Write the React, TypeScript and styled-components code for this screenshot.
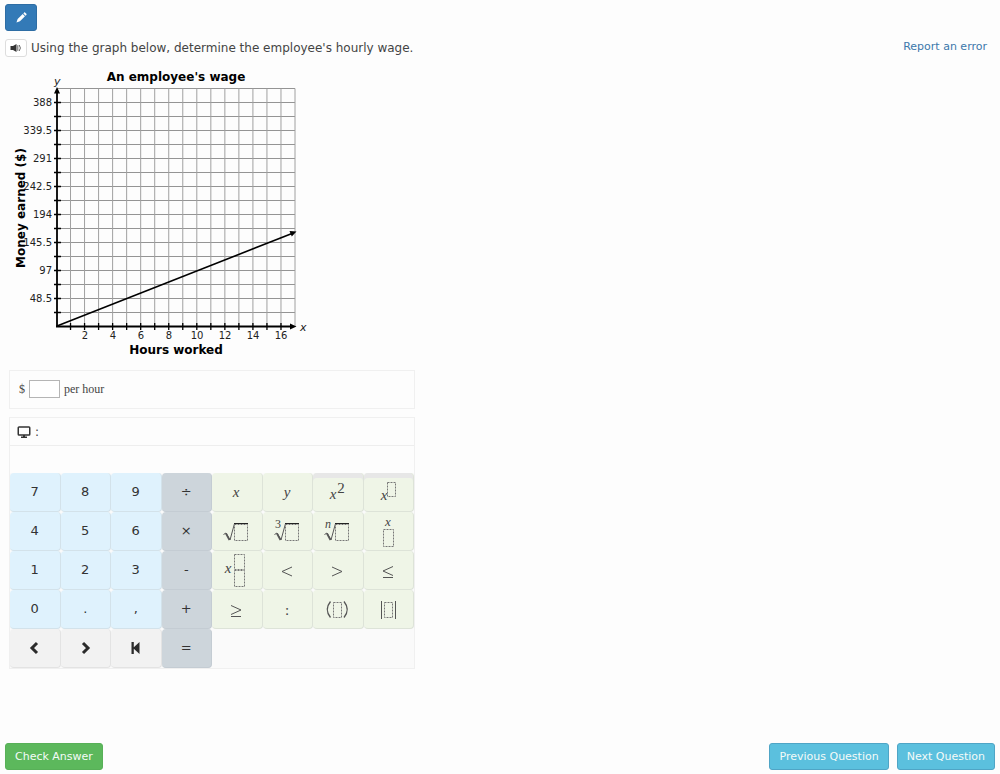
import React from "react";
import styled, { createGlobalStyle } from "styled-components";

const GlobalStyle = createGlobalStyle`
  * { box-sizing: border-box; }
  body {
    margin: 0;
    background: #fdfdfd;
    color: #444;
    font-family: "DejaVu Sans", Verdana, sans-serif;
    font-size: 12px;
    line-height: 16px;
  }
  button, input { font: inherit; color: inherit; }
`;

const Page = styled.div`
  min-height: 100vh;
  display: flex;
  flex-direction: column;
  padding: 4px 5px;
`;

const ToolButton = styled.button`
  width: 32px;
  height: 27px;
  padding: 0;
  display: grid;
  place-items: center;
  align-self: flex-start;
  border: 1px solid #2e6da4;
  border-radius: 3px;
  background: #337ab7;
`;

const QuestionRow = styled.div`
  display: flex;
  align-items: center;
  justify-content: space-between;
  margin-top: 8px;
`;

const Prompt = styled.div`
  display: flex;
  align-items: center;
  gap: 4px;
`;

const PromptText = styled.p`
  margin: 0;
`;

const SpeakButton = styled.button`
  width: 22px;
  height: 18px;
  padding: 0;
  display: grid;
  place-items: center;
  border: 1px solid #ddd;
  border-radius: 3px;
  background: #fff;
`;

const ReportLink = styled.a`
  padding: 0 8px 2px 0;
  font-size: 11px;
  color: #3c78ab;
  text-decoration: none;
`;

const Figure = styled.figure`
  margin: 9px 0 0;
  svg { display: block; }
`;

const Work = styled.main`
  width: 100%;
  max-width: 410px;
  padding-left: 4px;
  display: flex;
  flex-direction: column;
  gap: 8px;
`;

const AnswerPanel = styled.section`
  height: 39px;
  padding: 0 9px 2px;
  display: flex;
  align-items: center;
  gap: 4px;
  border: 1px solid #f0f0f0;
  font-family: "Liberation Serif", serif;
`;

const AnswerInput = styled.input`
  width: 31px;
  height: 18px;
  padding: 0 2px;
  border: 1px solid #b5b5b5;
  background: #fff;
`;

const Keypad = styled.section`
  border: 1px solid #f0f0f0;
`;

const KeypadHeader = styled.div`
  height: 28px;
  padding: 0 7px;
  display: flex;
  align-items: center;
  gap: 4px;
  border-bottom: 1px solid #eee;
`;

const Keys = styled.div`
  margin-top: 27px;
  display: grid;
  grid-template-columns: repeat(8, minmax(0, 1fr));
  grid-auto-rows: 39px;
  background: #fafafa;
`;

type Tone = "digit" | "operator" | "nav" | "math";

const toneColor: Record<Tone, string> = {
  digit: "#dff2fd",
  operator: "#cdd5db",
  nav: "#f2f2f2",
  math: "#eff5e7",
};

const toneBorder: Record<Tone, string> = {
  digit: "#d3e2ea",
  operator: "#c4ccd3",
  nav: "#e3e3e3",
  math: "#dde3d8",
};

const Key = styled.button<{ $tone: Tone; $tab?: boolean }>`
  padding: 0;
  display: grid;
  place-items: center;
  border: 0 solid ${(p) => toneBorder[p.$tone]};
  border-width: 0 1px 1px 0;
  border-radius: 4px;
  background: ${(p) => toneColor[p.$tone]};
  box-shadow: ${(p) => (p.$tab ? "inset 0 5px #e7e7e7" : "none")};
  color: #333;
  font-size: 13px;
  svg { display: block; }
`;

const Footer = styled.footer`
  margin-top: auto;
  display: flex;
  justify-content: space-between;
`;

const FooterGroup = styled.div`
  display: flex;
  gap: 8px;
`;

const ActionButton = styled.button<{ $kind: "success" | "info" }>`
  height: 27px;
  padding: 0 9px;
  border: 1px solid ${(p) => (p.$kind === "success" ? "#58b058" : "#4fa5c6")};
  border-radius: 3px;
  background: ${(p) => (p.$kind === "success" ? "#5cb85c" : "#5bc0de")};
  color: #f4fbf8;
  font-size: 11px;
`;

const STEP = 14;
const CELLS = 17;
const X0 = 52;
const Y0 = 260;
const SIZE = STEP * CELLS;

const Graph = () => {
  const steps = Array.from({ length: CELLS }, (_, i) => i + 1);
  return (
    <svg width="310" height="304" viewBox="0 0 310 304" role="img" aria-label="Graph of money earned against hours worked">
      <g stroke="#949494" strokeWidth="1">
        {steps.map((n) => (
          <path key={n} d={`M${X0} ${Y0 - n * STEP + 0.5}h${SIZE}`} />
        ))}
      </g>
      <g stroke="#a0a0a0" strokeWidth="1">
        {steps.map((n) => (
          <path key={n} d={`M${X0 + n * (STEP + 0.03) - 0.5} ${Y0}v${-SIZE + 0.5}`} />
        ))}
      </g>
      <g stroke="#000" strokeWidth="1.3">
        {steps.slice(0, -1).map((n) => (
          <path key={n} d={`M${X0 - 3} ${Y0 - n * STEP + 0.5}h7M${X0 + n * (STEP + 0.03) - 0.5} ${Y0 - 3}v7`} />
        ))}
      </g>
      <path d={`M${X0} ${Y0 + 1}v${-SIZE + 4}M${X0 - 1} ${Y0 + 0.5}h${SIZE - 2}`} stroke="#000" strokeWidth="1.8" />
      <path d="M52 21l3 6.500h-6zM291.500 260.500l-6.500-3v6z" />
      <path d="M52 260l235-92.500" stroke="#000" strokeWidth="1.600" fill="none" />
      <path d="M291.500 165.500l-7-.5 2.300 5.500z" />
      <g fontSize="10" fill="#222" textAnchor="end">
        {["48.5", "97", "145.5", "194", "242.5", "291", "339.5", "388"].map((label, i) => (
          <text key={label} x={X0 - 5} y={Y0 - (i + 1) * 2 * STEP + 4}>{label}</text>
        ))}
      </g>
      <g fontSize="10" fill="#222" textAnchor="middle">
        {[2, 4, 6, 8, 10, 12, 14, 16].map((n) => (
          <text key={n} x={X0 + n * STEP} y={Y0 + 13}>{n}</text>
        ))}
      </g>
      <g fontSize="11" fontStyle="italic" fill="#222">
        <text x="49" y="19">y</text>
        <text x="295" y="265">x</text>
      </g>
      <g fontSize="12" fontWeight="bold" fill="#000" textAnchor="middle">
        <text x="171" y="15">An employee's wage</text>
        <text x="171" y="288">Hours worked</text>
        <text transform="translate(20 142) rotate(-90)">Money earned ($)</text>
      </g>
    </svg>
  );
};

const MathSvg = ({ children }: { children: React.ReactNode }) => (
  <svg width="50" height="38" viewBox="0 0 50 38" fill="none" stroke="#555" strokeWidth="1" aria-hidden="true">
    {children}
  </svg>
);

const Sym = ({ x, y, size = 15, upright = false, children }: { x: number; y: number; size?: number; upright?: boolean; children: string }) => (
  <text
    x={x}
    y={y}
    fontSize={size}
    fontStyle={upright ? "normal" : "italic"}
    fontFamily='"Liberation Serif", serif'
    textAnchor="middle"
    fill="#444"
    stroke="none"
  >
    {children}
  </text>
);

const Slot = ({ x, y, w, h }: { x: number; y: number; w: number; h: number }) => (
  <rect x={x + 0.5} y={y + 0.5} width={w} height={h} strokeDasharray="2 1" stroke="#777" />
);

const Radical = () => (
  <>
    <path d="M11.500 22.500l2.500-1.500 4 7 4.500-16.500" />
    <path d="M14 21.500l3.500 6.500" strokeWidth="1.800" />
    <path d="M22 11.500h14" stroke="#222" />
    <Slot x={22} y={12} w={13} h={16} />
  </>
);

const Pencil = () => (
  <svg width="11" height="11" viewBox="0 0 12 12" fill="#fff" aria-hidden="true">
    <path d="M.5 11.500l1.300-3.800 5.500-5.500 2.500 2.500-5.500 5.500zM8 1.500l.8-.8c.4-.4.9-.4 1.300 0l1.200 1.200c.4.4.4.900 0 1.300l-.8.8z" />
  </svg>
);

const Speaker = () => (
  <svg width="12" height="10" viewBox="0 0 12 10" fill="#333" aria-hidden="true">
    <path d="M.5 3H3l3.500-2v8L3 7H.5z" />
    <path d="M7.800 2.200v5.600M9.200 2q2.400 3 0 6" fill="none" stroke="#666" />
  </svg>
);

const Monitor = () => (
  <svg width="14" height="12" viewBox="0 0 14 12" aria-hidden="true">
    <rect x="1.250" y="1" width="11.500" height="8" rx=".8" fill="none" stroke="#333" strokeWidth="1.500" />
    <path d="M6 9h2v1.500h2V12H4v-1.500h2z" fill="#333" />
  </svg>
);

const Chevron = ({ flip = false }: { flip?: boolean }) => (
  <svg width="12" height="14" viewBox="0 0 12 14" fill="none" stroke="#2b2b2b" strokeWidth="3" aria-hidden="true">
    <path d={flip ? "M4 2l5 5-5 5" : "M8 2L3 7l5 5"} />
  </svg>
);

const StepBack = () => (
  <svg width="10" height="12" viewBox="0 0 10 12" fill="#2b2b2b" aria-hidden="true">
    <path d="M.5 0h2.300v5.200L8.500 0v12L2.800 6.800V12H.5z" />
  </svg>
);

type KeyDef = { label: string; tone: Tone; face?: React.ReactNode; tab?: boolean };

const digit = (label: string): KeyDef => ({ label, tone: "digit" });
const op = (label: string): KeyDef => ({ label, tone: "operator" });
const math = (label: string, face: React.ReactNode, tab = false): KeyDef => ({
  label,
  tone: "math",
  face: <MathSvg>{face}</MathSvg>,
  tab,
});

const keys: KeyDef[] = [
  digit("7"), digit("8"), digit("9"), op("÷"),
  math("x", <Sym x={24} y={24}>x</Sym>),
  math("y", <Sym x={24} y={24}>y</Sym>),
  math("x squared", <><Sym x={20} y={26}>x</Sym><Sym x={28} y={20} upright>2</Sym></>, true),
  math("x to a power", <><Sym x={20} y={27}>x</Sym><Slot x={23} y={9} w={8} h={14} /></>, true),

  digit("4"), digit("5"), digit("6"), op("×"),
  math("Square root", <Radical />),
  math("Cube root", <><Radical /><Sym x={15} y={16} size={12} upright>3</Sym></>),
  math("nth root", <><Radical /><Sym x={15} y={16} size={12}>n</Sym></>),
  math("x over a value", <><Sym x={24} y={14} size={13}>x</Sym><Slot x={19} y={17} w={10} h={17} /></>),

  digit("1"), digit("2"), digit("3"), op("-"),
  math("Mixed number", <><Sym x={16} y={22}>x</Sym><Slot x={22} y={3} w={10} h={15} /><Slot x={22} y={19} w={10} h={16} /></>),
  math("Less than", <path d="M29 16l-10 4.500 10 4.500" />),
  math("Greater than", <path d="M19 16l10 4.500-10 4.500" />),
  math("Less than or equal", <path d="M29 15.500l-10 4.500 10 4.500M19 26.500h10" />),

  digit("0"), digit("."), digit(","), op("+"),
  math("Greater than or equal", <path d="M19 15.500l10 4.500-10 4.500M19 26.500h10" />),
  math("Ratio", <Sym x={24} y={25} upright>:</Sym>),
  math("Parentheses", <><path d="M17.500 11.500q-6.500 8 0 16M31 11.500q6.500 8 0 16" strokeWidth="1.300" /><Slot x={20} y={12} w={8} h={15} /></>),
  math("Absolute value", <><path d="M17.500 11v18M31.500 11v18" /><Slot x={20} y={12} w={8} h={15} /></>),

  { label: "Left", tone: "nav", face: <Chevron /> },
  { label: "Right", tone: "nav", face: <Chevron flip /> },
  { label: "Back to start", tone: "nav", face: <StepBack /> },
  op("="),
];

export default function App() {
  return (
    <>
      <GlobalStyle />
      <Page>
        <ToolButton type="button" aria-label="Draw"><Pencil /></ToolButton>
        <QuestionRow>
          <Prompt>
            <SpeakButton type="button" aria-label="Read aloud"><Speaker /></SpeakButton>
            <PromptText>Using the graph below, determine the employee's hourly wage.</PromptText>
          </Prompt>
          <ReportLink href="#report">Report an error</ReportLink>
        </QuestionRow>
        <Figure><Graph /></Figure>
        <Work>
          <AnswerPanel>
            <label htmlFor="wage">$</label>
            <AnswerInput id="wage" type="text" />
            <span>per hour</span>
          </AnswerPanel>
          <Keypad aria-label="Math keypad">
            <KeypadHeader><Monitor />:</KeypadHeader>
            <Keys>
              {keys.map((k) => (
                <Key key={k.label} type="button" $tone={k.tone} $tab={k.tab} aria-label={k.label}>
                  {k.face ?? k.label}
                </Key>
              ))}
            </Keys>
          </Keypad>
        </Work>
        <Footer>
          <ActionButton type="button" $kind="success">Check Answer</ActionButton>
          <FooterGroup>
            <ActionButton type="button" $kind="info">Previous Question</ActionButton>
            <ActionButton type="button" $kind="info">Next Question</ActionButton>
          </FooterGroup>
        </Footer>
      </Page>
    </>
  );
}
